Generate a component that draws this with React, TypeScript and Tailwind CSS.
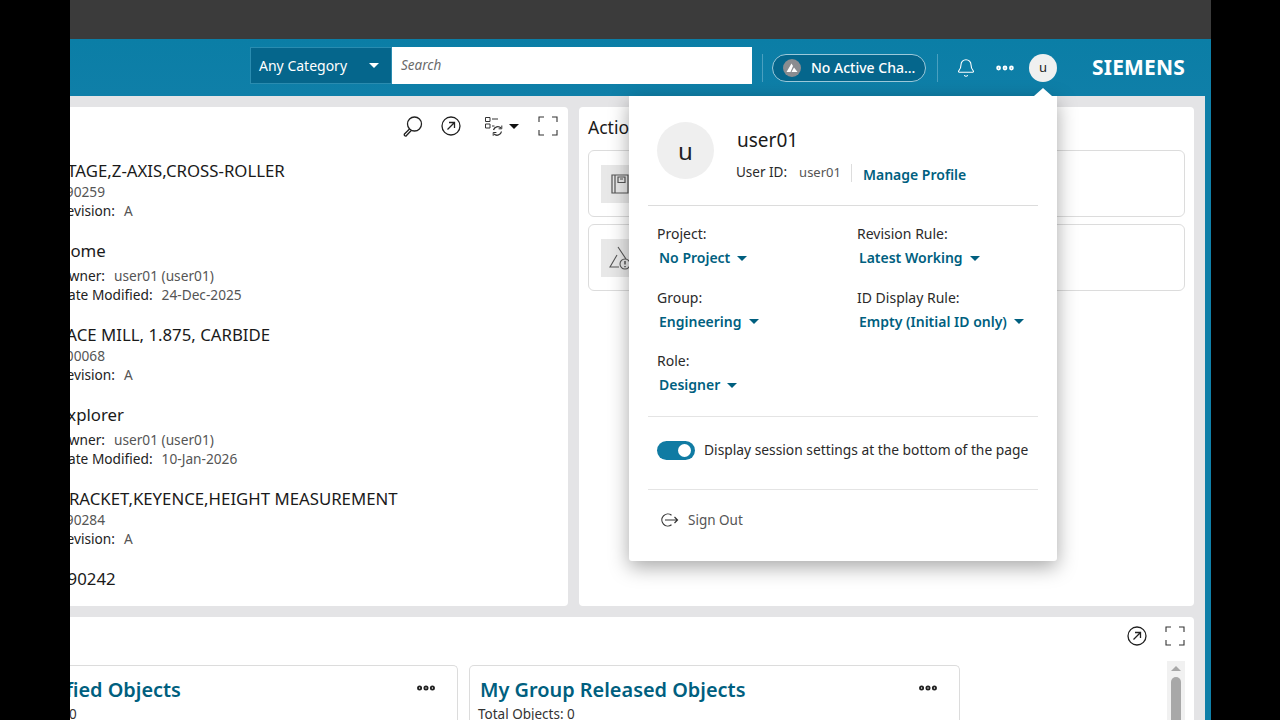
import { Bell, MoreHorizontal } from "lucide-react";

const font = { teal: "text-[#005f7f]" };

const Caret = ({ className = "" }: { className?: string }) => (
  <span
    className={`inline-block w-0 h-0 border-x-[5px] border-x-transparent border-t-[5px] border-t-current ${className}`}
  />
);

const SearchIcon = () => (
  <svg width="22" height="22" viewBox="0 0 22 22" fill="none" stroke="#222" strokeWidth="1.3">
    <circle cx="12.5" cy="9" r="7" />
    <path d="M7.5 14 L2.5 19 A1 1 0 0 0 4.5 20.5 L9 15.7" />
  </svg>
);

const OpenIcon = () => (
  <svg width="20" height="20" viewBox="0 0 20 20" fill="none" stroke="#222" strokeWidth="1.3">
    <circle cx="10" cy="10" r="9" />
    <path d="M6.5 13.5 L13.5 6.5 M8 6.5 H13.5 V12" />
  </svg>
);

const FullIcon = () => (
  <svg width="20" height="20" viewBox="0 0 20 20" fill="none" stroke="#333" strokeWidth="1.1">
    <path d="M1 6 V1 H6 M14 1 H19 V6 M1 14 V19 H6 M14 19 H19 V14" />
  </svg>
);

const ListSyncIcon = () => (
  <svg width="20" height="20" viewBox="0 0 20 20" fill="none" stroke="#333" strokeWidth="1">
    <path d="M1.5 1.5 H6 V5.5 H1.5 Z M1.5 8 H6 V12 H1.5 Z M8 3 H14 M8 10 H10.5" />
    <path d="M9.5 14 A4.5 4.5 0 0 1 17 12 M17.5 15.5 A4.5 4.5 0 0 1 10 18" strokeWidth="1.3" />
    <path d="M17.8 9.5 V12.8 H14.6 M9.2 19.8 V16.5 H12.4" />
  </svg>
);

const SiteIcon = () => (
  <svg width="18" height="18" viewBox="0 0 18 18" fill="#fff">
    <circle cx="9" cy="9" r="9" fill="#8a8c90" />
    <path d="M3.5 13 L8.5 4.5 L10 7 L7.5 13 Z M8.5 13 L11 8.5 L14.5 13 Z" />
  </svg>
);

const SignOutIcon = () => (
  <svg width="20" height="16" viewBox="0 0 20 16" fill="none" stroke="#333" strokeWidth="1.2">
    <path d="M12.5 3.2 A6 6 0 1 0 12.5 12.8" />
    <path d="M6 8 H18.5 M15.5 5 L18.5 8 L15.5 11" />
  </svg>
);

const Book = () => (
  <svg width="18" height="20" viewBox="0 0 18 20" fill="none" stroke="#555" strokeWidth="1.2">
    <path d="M1 1 H17 V19 H1 Z M4 1 V19 M7 3 H14 V8.5 H7 Z M9 5 H12" />
  </svg>
);

const Warn = () => (
  <svg width="22" height="24" viewBox="0 0 22 24" fill="none" stroke="#555" strokeWidth="1.1">
    <path d="M9 1 L17 13 M8 9 L1 21 H10" />
    <circle cx="16" cy="18" r="5" fill="#e8e8e8" />
    <path d="M16 15 V18.5 M16 20 V21.2" strokeWidth="1.5" />
  </svg>
);

const Dropdown = ({ label, value }: { label: string; value: string }) => (
  <div>
    <div className="text-[14px] leading-[20px] text-[#2a2a2a]">{label}</div>
    <div className={`mt-[4px] ml-[2px] flex items-center gap-[7px] text-[14px] leading-[20px] font-semibold ${font.teal}`}>
      {value}
      <Caret />
    </div>
  </div>
);

const Rows = [
  { title: "STAGE,Z-AXIS,CROSS-ROLLER", id: "090259", b: "Revision:", bv: "A" },
  { title: "Home", a: "Owner:", av: "user01 (user01)", b: "Date Modified:", bv: "24-Dec-2025" },
  { title: "FACE MILL, 1.875, CARBIDE", id: "000068", b: "Revision:", bv: "A" },
  { title: "Explorer", a: "Owner:", av: "user01 (user01)", b: "Date Modified:", bv: "10-Jan-2026" },
  { title: "BRACKET,KEYENCE,HEIGHT MEASUREMENT", id: "090284", b: "Revision:", bv: "A" },
];

const ListRow = ({ r }: { r: (typeof Rows)[number] }) => (
  <div className={r.id ? "h-[80px]" : "h-[84px]"}>
    <div className="text-[16.8px] leading-[24px] text-[#1a1a1a] whitespace-nowrap">{r.title}</div>
    {r.id ? (
      <div className="-mt-[1px] text-[13.7px] leading-[19px] text-[#555]">{r.id}</div>
    ) : (
      <div className="mt-[3px] flex gap-[9px] text-[13.7px] leading-[19px] text-[#555]">
        <span className="text-[#222]">{r.a}</span>
        {r.av}
      </div>
    )}
    <div className="flex gap-[9px] text-[13.7px] leading-[19px] text-[#555]">
      <span className="text-[#222]">{r.b}</span>
      {r.bv}
    </div>
  </div>
);

const ActionTile = ({ icon }: { icon: React.ReactNode }) => (
  <div className="h-[67px] rounded-[6px] border border-[#dcdcdc] flex items-center px-[12px]">
    <div className="w-[38px] h-[38px] bg-[#e8e8e8] flex items-center justify-center">{icon}</div>
  </div>
);

const ObjectCard = ({ title, className = "", count }: { title: string; className?: string; count: string }) => (
  <div className={`h-[80px] rounded-t-[5px] border border-b-0 border-[#dcdcdc] bg-white relative shrink-0 ${className}`}>
    <div className="pl-[10px] pt-[10px] text-[19.9px] leading-[27px] font-semibold text-[#005f7f] whitespace-nowrap">
      {title}
    </div>
    <div className="pl-[8px] mt-[2px] text-[13.5px] leading-[18px] text-[#333] whitespace-nowrap">{count}</div>
    <div className="absolute right-[20px] top-[11px] flex gap-[2px]">
      <MoreHorizontal size={22} strokeWidth={3.5} color="#222" />
    </div>
  </div>
);

export default function App() {
  return (
    <div className="w-[1280px] h-[720px] bg-black flex overflow-hidden relative font-['Noto_Sans',sans-serif]">
      <div className="w-[70px] bg-black shrink-0 z-10" />

      <div className="w-[1141px] flex flex-col shrink-0">
        <div className="h-[39px] bg-[#3b3b3b] shrink-0" />

        <header className="h-[57px] shrink-0 bg-gradient-to-b from-[#0b7ea6] to-[#0f7fa8] flex items-center">
          <div className="ml-[180px] -mt-[4px] w-[142px] h-[37px] bg-[#05668c] border border-[#2a8cb0] flex items-center justify-between pl-[8px] pr-[12px] text-[14px] text-white">
            Any Category
            <Caret />
          </div>
          <div className="w-[360px] -mt-[4px] h-[37px] bg-white flex items-center pl-[9px] text-[13.5px] italic text-[#6b6b6b]">
            Search
          </div>
          <div className="ml-[10px] w-px h-[28px] bg-[#4aa0c0]" />
          <div className="ml-[9px] w-[154px] h-[28px] rounded-full bg-[#05668c] border border-[#9cc9da] flex items-center pl-[10px] gap-[10px] text-[14px] font-medium text-white whitespace-nowrap">
            <SiteIcon />
            No Active Cha...
          </div>
          <div className="ml-[11px] w-px h-[28px] bg-[#4aa0c0]" />
          <div className="ml-[18px]">
            <Bell size={20} strokeWidth={1.3} color="#fff" />
          </div>
          <div className="ml-[18px]">
            <MoreHorizontal size={22} strokeWidth={3.2} color="#fff" />
          </div>
          <div className="ml-[13px] w-[28px] h-[28px] rounded-full bg-[#f0f0f0] flex items-center justify-center text-[13px] text-[#222]">
            u
          </div>
          <div className="ml-[35px] text-[21px] font-bold text-white tracking-[0.2px]">SIEMENS</div>
        </header>

        <div className="flex-1 flex min-h-0">
          <div className="w-[1135px] bg-[#e4e4e6] flex flex-col gap-[11px] pt-[11px] min-w-0">
            <div className="flex gap-[11px] h-[499px] shrink-0">
              <section className="w-[498px] bg-white rounded-r-[4px] relative overflow-hidden">
                <div className="flex justify-end items-center gap-[19px] h-[38px] pr-[10px]">
                  <div className="-mr-[2px]">
                    <SearchIcon />
                  </div>
                  <OpenIcon />
                  <div className="flex items-center gap-[5px] ml-[4px]">
                    <ListSyncIcon />
                    <Caret className="text-[#111]" />
                  </div>
                  <FullIcon />
                </div>
                <div className="-ml-[12px] mt-[14px]">
                  {Rows.map((r) => (
                    <ListRow key={r.title} r={r} />
                  ))}
                  <div className="text-[16.8px] leading-[24px] text-[#1a1a1a]">090242</div>
                </div>
              </section>

              <section className="w-[615px] bg-white rounded-[4px] px-[9px]">
                <div className="h-[43px] pb-[2px] flex items-center text-[17.5px] text-[#1a1a1a]">Actions</div>
                <div className="flex flex-col gap-[7px]">
                  <ActionTile icon={<Book />} />
                  <ActionTile icon={<Warn />} />
                </div>
              </section>
            </div>

            <section className="flex-1 w-[1124px] bg-white rounded-tr-[4px] relative overflow-hidden">
              <div className="flex justify-end items-center gap-[18px] h-[38px] pr-[9px]">
                <OpenIcon />
                <FullIcon />
              </div>
              <div className="flex gap-[11px] -ml-[99px] mt-[10px]">
                <ObjectCard title="My Modified Objects" count="Total Objects: 0" className="w-[487px]" />
                <ObjectCard title="My Group Released Objects" count="Total Objects: 0" className="w-[491px]" />
              </div>
              <div className="absolute right-[9px] top-[44px] w-[18px] h-[60px] bg-[#f1f1f1] flex flex-col items-center">
                <Caret className="mt-[5px] text-[#a8a8a8] rotate-180" />
                <div className="mt-[6px] w-[10px] flex-1 rounded-t-full bg-[#a8a8a8]" />
              </div>
            </section>
          </div>
          <div className="w-[6px] bg-[#0f7fa8]" />
        </div>
      </div>

      <div className="flex-1 bg-black" />

      <div className="absolute left-[629px] top-[96px] w-[428px] h-[465px] bg-white rounded-b-[3px] shadow-[0_6px_20px_rgba(0,0,0,0.35)] z-20">
        <div className="absolute -top-[8px] right-[5px] w-0 h-0 border-x-[9px] border-x-transparent border-b-[8px] border-b-white" />

        <div className="flex pt-[26px] pl-[28px]">
          <div className="w-[57px] h-[57px] rounded-full bg-[#efefef] flex items-center justify-center text-[24px] text-[#222]">
            u
          </div>
          <div className="ml-[22px] pt-[5px]">
            <div className="ml-[1px] text-[19px] leading-[26px] text-[#1a1a1a]">user01</div>
            <div className="mt-[9px] flex items-center text-[13.5px] text-[#2a2a2a]">
              User ID:
              <span className="ml-[12px] text-[13px] text-[#555]">user01</span>
              <span className="ml-[10px] w-px h-[18px] bg-[#dddddd]" />
              <span className={`ml-[11px] translate-y-[2px] font-semibold text-[14px] ${font.teal}`}>Manage Profile</span>
            </div>
          </div>
        </div>

        <div className="mt-[22px] mx-[19px] border-t border-[#dcdcdc]" />

        <div className="mt-[18px] ml-[28px] grid grid-cols-[200px_1fr] gap-y-[19.5px]">
          <Dropdown label="Project:" value="No Project" />
          <Dropdown label="Revision Rule:" value="Latest Working" />
          <Dropdown label="Group:" value="Engineering" />
          <Dropdown label="ID Display Rule:" value="Empty (Initial ID only)" />
          <Dropdown label="Role:" value="Designer" />
        </div>

        <div className="mt-[21px] mx-[19px] border-t border-[#e4e4e4]" />

        <div className="mt-[23px] ml-[28px] flex items-center gap-[9px]">
          <div className="w-[38px] h-[19px] rounded-full bg-[#107ba3] flex items-center justify-end pr-[4px]">
            <div className="w-[13px] h-[13px] rounded-full bg-white" />
          </div>
          <span className="text-[13.8px] text-[#2a2a2a] whitespace-nowrap">Display session settings at the bottom of the page</span>
        </div>

        <div className="mt-[28px] mx-[19px] border-t border-[#e4e4e4]" />

        <div className="mt-[20px] ml-[30px] flex items-center gap-[9px] text-[13.5px] text-[#555]">
          <SignOutIcon />
          Sign Out
        </div>
      </div>
    </div>
  );
}
